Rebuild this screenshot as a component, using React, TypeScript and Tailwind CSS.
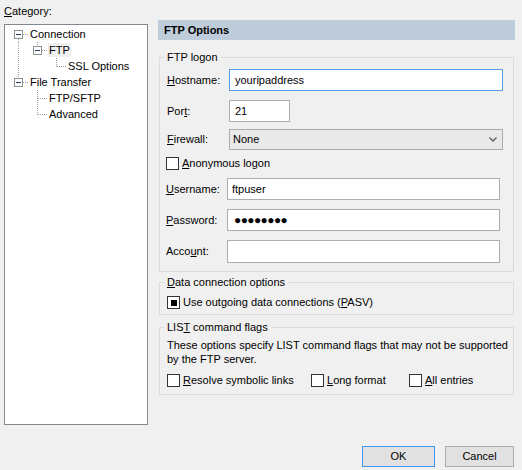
import React from 'react';

const LINE = '#a0a0a0';

function Cell({ up, down, right, box }: { up?: boolean; down?: boolean; right?: boolean; box?: boolean }) {
  return (
    <svg width="19" height="16" className="block shrink-0" shapeRendering="crispEdges">
      {up && <line x1="9.5" y1="0" x2="9.5" y2={box ? 4 : 9} stroke={LINE} strokeDasharray="1 1" />}
      {down && <line x1="9.5" y1={box ? 13 : 8} x2="9.5" y2="16" stroke={LINE} strokeDasharray="1 1" />}
      {right && <line x1={box ? 14 : 10} y1="8.5" x2="19" y2="8.5" stroke={LINE} strokeDasharray="1 1" />}
      {box && (
        <>
          <rect x="5.5" y="4.5" width="8" height="8" fill="white" stroke="#919191" />
          <line x1="7" y1="8.5" x2="12" y2="8.5" stroke="#1e395b" />
        </>
      )}
    </svg>
  );
}

type C = { up?: boolean; down?: boolean; right?: boolean; box?: boolean };

const rows: { cells: C[]; text: string; sel?: boolean }[] = [
  { cells: [{ box: true, down: true, right: true }], text: 'Connection' },
  { cells: [{ up: true, down: true }, { box: true, up: true, right: true }], text: 'FTP', sel: true },
  { cells: [{ up: true, down: true }, {}, { up: true, right: true }], text: 'SSL Options' },
  { cells: [{ up: true, box: true, right: true }], text: 'File Transfer' },
  { cells: [{}, { up: true, down: true, right: true }], text: 'FTP/SFTP' },
  { cells: [{}, { up: true, right: true }], text: 'Advanced' },
];

function Check({ checked }: { checked?: boolean }) {
  return (
    <div className="w-[13px] h-[13px] border border-[#333333] bg-white flex items-center justify-center shrink-0">
      {checked && <div className="w-[6px] h-[6px] bg-[#000000]" />}
    </div>
  );
}

function Group({ label, children, className }: { label: React.ReactNode; children: React.ReactNode; className?: string }) {
  return (
    <div className={'ml-[1px] w-[355px] border border-[#dcdcdc] ' + (className || '')}>
      <div className="-mt-[8px] ml-[4px] px-[3px] w-fit bg-[#f0f0f0] leading-[14px] h-[14px]">{label}</div>
      {children}
    </div>
  );
}

export default function App() {
  return (
    <div className="w-[522px] h-[470px] bg-[#f0f0f0] text-[11px] text-black font-['Liberation_Sans',Arial,sans-serif] flex flex-col overflow-hidden">
      <div className="flex">
        <div className="w-[158px] pl-[4px] pt-[4px] shrink-0">
          <div className="h-[20px] leading-[14px]">
            <span className="underline">C</span>ategory:
          </div>
          <div className="w-[144px] h-[401px] border border-[#828790] bg-white pt-[1px] pl-[4px]">
            {rows.map((r, i) => (
              <div key={i} className="flex h-[16px] items-center">
                {r.cells.map((c, j) => (
                  <Cell key={j} {...c} />
                ))}
                <span className={'ml-[1px] px-[1px] leading-[14px] h-[14px] ' + (r.sel ? 'bg-[#f0f0f0]' : '')}>{r.text}</span>
              </div>
            ))}
          </div>
        </div>
        <div className="w-[357px] pt-[20px] shrink-0">
          <div className="h-[20px] bg-[#bfcddb] font-bold pl-[6px] flex items-center">FTP Options</div>

          <Group label="FTP logon" className="mt-[17px] pb-[8px]">
            <div className="pl-[7px]">
              <div className="flex items-center mt-[5px] h-[22px]">
                <div className="w-[62px]"><span className="underline">H</span>ostname:</div>
                <div className="w-[274px] h-[22px] border border-[#569de5] bg-white flex items-center pl-[5px]">youripaddress</div>
              </div>
              <div className="flex items-center mt-[9px] h-[22px]">
                <div className="w-[62px]">Por<span className="underline">t</span>:</div>
                <div className="w-[61px] h-[22px] border border-[#abadb3] bg-white flex items-center pl-[5px]">21</div>
              </div>
              <div className="flex items-center mt-[7px] h-[21px]">
                <div className="w-[62px]"><span className="underline">F</span>irewall:</div>
                <div className="w-[274px] h-[21px] border border-[#acacac] bg-[#e9e9e9] flex items-center pl-[3px] pr-[5px] justify-between">
                  <span>None</span>
                  <svg width="8" height="5" viewBox="0 0 8 5" className="block">
                    <path d="M0.5 0.5 L4 4 L7.5 0.5" fill="none" stroke="#606060" strokeWidth="1.4" />
                  </svg>
                </div>
              </div>
              <div className="flex items-center mt-[7px] h-[13px] -ml-[1px]">
                <Check />
                <span className="ml-[3px]"><span className="underline">A</span>nonymous logon</span>
              </div>
              <div className="flex items-center mt-[8px] h-[22px] -ml-[1px]">
                <div className="w-[61px]"><span className="underline">U</span>sername:</div>
                <div className="w-[273px] h-[22px] border border-[#abadb3] bg-white flex items-center pl-[4px]">ftpuser</div>
              </div>
              <div className="flex items-center mt-[9px] h-[22px] -ml-[1px]">
                <div className="w-[61px]"><span className="underline">P</span>assword:</div>
                <div className="w-[273px] h-[22px] border border-[#abadb3] bg-white flex items-center pl-[6px] tracking-[-0.6px] text-[12px]">●●●●●●●●</div>
              </div>
              <div className="flex items-center mt-[9px] h-[23px] -ml-[1px]">
                <div className="w-[61px]">Acco<span className="underline">u</span>nt:</div>
                <div className="w-[273px] h-[23px] border border-[#abadb3] bg-white" />
              </div>
            </div>
          </Group>

          <Group label={<><span className="underline">D</span>ata connection options</>} className="mt-[10px] pb-[5px]">
            <div className="pl-[7px] flex items-center mt-[7px] h-[13px]">
              <Check checked />
              <span className="ml-[3px]">Use outgoing data connections (<span className="underline">P</span>ASV)</span>
            </div>
          </Group>

          <Group label={<>LIS<span className="underline">T</span> command flags</>} className="mt-[12px] pb-[7px]">
            <div className="pl-[7px]">
              <div className="mt-[4px] leading-[14px]">
                These options specify LIST command flags that may not be supported
                <br />
                by the FTP server.
              </div>
              <div className="flex items-center mt-[8px] h-[13px]">
                <div className="w-[144px] flex items-center">
                  <Check />
                  <span className="ml-[3px]"><span className="underline">R</span>esolve symbolic links</span>
                </div>
                <div className="w-[98px] flex items-center">
                  <Check />
                  <span className="ml-[3px]"><span className="underline">L</span>ong format</span>
                </div>
                <div className="flex items-center">
                  <Check />
                  <span className="ml-[3px]"><span className="underline">A</span>ll entries</span>
                </div>
              </div>
            </div>
          </Group>
        </div>
      </div>
      <div className="mt-auto pb-[3px] pr-[8px] flex justify-end gap-[10px]">
        <div className="w-[73px] h-[21px] border border-[#3c96ea] bg-[#e1e1e1] flex items-center justify-center">OK</div>
        <div className="w-[69px] h-[21px] border border-[#adadad] bg-[#e1e1e1] flex items-center justify-center">Cancel</div>
      </div>
    </div>
  );
}
